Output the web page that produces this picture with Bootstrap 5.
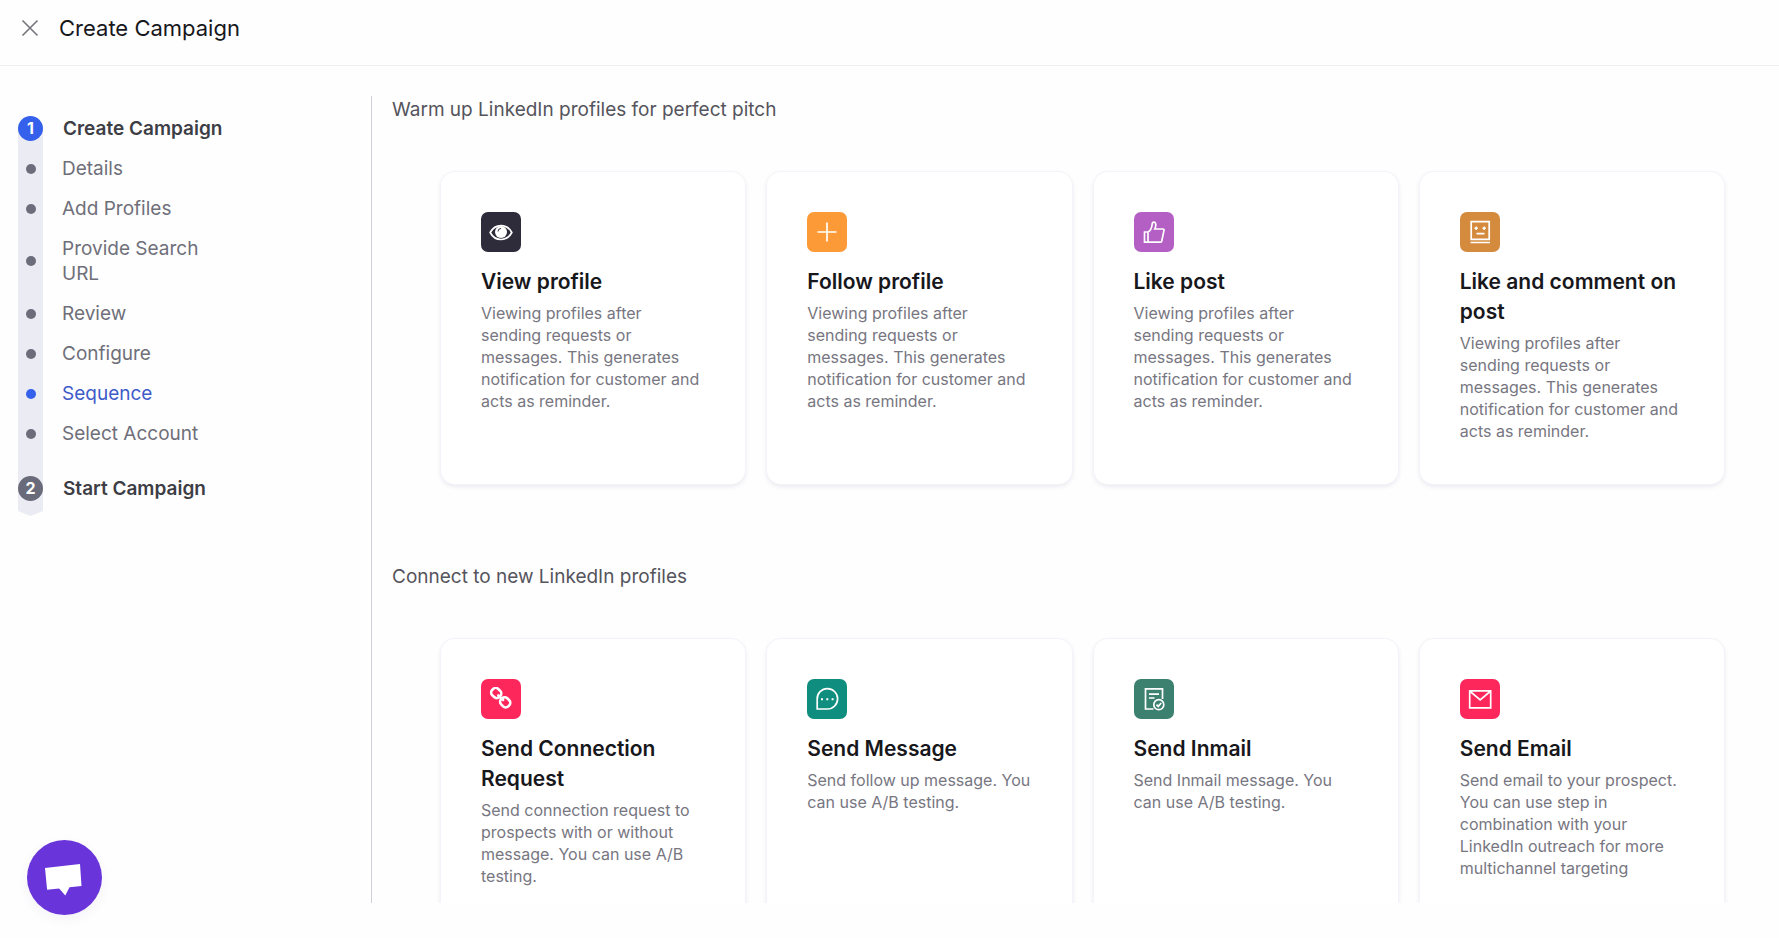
<!DOCTYPE html>
<html lang="en">
<head>
<meta charset="utf-8">
<meta name="viewport" content="width=device-width, initial-scale=1">
<title>Create Campaign</title>
<link rel="stylesheet" href="https://cdn.jsdelivr.net/npm/bootstrap@5.3.0/dist/css/bootstrap.min.css">
<style>
  body { font-family: Inter, "Open Sans", sans-serif; background: #fefefe; color: #17171c; }
  .topbar { height: 66px; padding: 0 20px 9px; gap: 19px; border-bottom: 1px solid #f0edf3; }
  .topbar h1 { font-size: 22px; line-height: 28px; font-weight: 400; }
  .close-btn { width: 20px; height: 20px; color: #77757c; }
  .workspace { padding: 30px 0 35px; min-height: 0; }

  /* step navigation */
  .sidebar { flex: 0 0 371px; padding: 20px 18px 0; }
  .steps { gap: 15px; padding-bottom: 15px; font-size: 19px; line-height: 25px; }
  .steps::before {
    content: ""; position: absolute; z-index: -1; top: 12px; bottom: 0; left: 0; width: 25px;
    background: #ebebf4; clip-path: polygon(0 0, 100% 0, 100% calc(100% - 5px), 50% 100%, 0 calc(100% - 5px));
  }
  .steps li { display: flex; align-items: center; gap: 19px; }
  .steps .major { gap: 20px; }
  .steps a { color: #6f6f7a; text-decoration: none; max-width: 150px; }
  .steps .major a { color: #3d3d45; font-weight: 600; max-width: none; }
  .steps .last { margin-top: 15px; }
  .marker { flex: 0 0 25px; height: 25px; display: grid; place-items: center; border-radius: 50%; color: #fff; font-size: 16px; font-weight: 700; }
  .major .marker { background: #696b7a; }
  .major.current .marker { background: #3460eb; }
  .minor .marker::before { content: ""; width: 10px; height: 10px; border-radius: 50%; background: #6c6d7a; }
  .minor.active .marker::before { background: #3460eb; }
  .steps .active a { color: #3e5bc9; }

  /* action cards */
  .panel { border-left: 1px solid #d2d0d7; padding: 0 55px 0 20px; overflow-y: auto; scrollbar-width: none; }
  .panel::-webkit-scrollbar { display: none; }
  .panel section { margin-bottom: 79px; }
  .panel h2 { font-size: 19px; line-height: 27px; font-weight: 400; color: #55545c; margin: 0 0 49px; }
  .action-grid { display: grid; grid-template-columns: repeat(4, minmax(0, 1fr)); grid-auto-rows: minmax(312px, auto); gap: 22px; padding-left: 49px; }
  .action-card { border: 0; border-radius: 14px; background: #fff; padding: 40px; box-shadow: 0 0 0 1px #f6f2f9, 0 2px 5px rgba(60, 35, 100, .12); }
  .action-card h3 { font-size: 21px; line-height: 30px; font-weight: 600; margin: 15px 0 5px; }
  .action-card p { font-size: 16px; line-height: 22px; color: #777681; margin: 0; }
  .tile { width: 40px; height: 40px; border-radius: 7px; display: grid; place-items: center; color: #fff; }
  .tile svg { width: 24px; height: 24px; fill: none; stroke: currentColor; stroke-width: 1.7; }

  .chat-btn { width: 75px; height: 75px; left: 27px; bottom: 23px; background: #6935da; box-shadow: 0 4px 12px rgba(60, 30, 120, .06); }
</style>
</head>
<body>
<div class="d-flex flex-column vh-100 overflow-hidden">
  <header class="topbar d-flex align-items-center flex-shrink-0">
    <button type="button" class="close-btn btn p-0 border-0 d-flex align-items-center justify-content-center" aria-label="Close">
      <svg width="18" height="18" viewBox="0 0 18 18" fill="none" stroke="currentColor" stroke-width="1.6"><path d="M1.500 1.500l15 15M16.500 1.500l-15 15"/></svg>
    </button>
    <h1 class="m-0">Create Campaign</h1>
  </header>

  <div class="workspace d-flex flex-grow-1">
    <nav class="sidebar" aria-label="Campaign steps">
      <ol class="steps list-unstyled d-flex flex-column position-relative z-0 m-0">
        <li class="major current"><span class="marker">1</span><a href="#">Create Campaign</a></li>
        <li class="minor"><span class="marker"></span><a href="#">Details</a></li>
        <li class="minor"><span class="marker"></span><a href="#">Add Profiles</a></li>
        <li class="minor"><span class="marker"></span><a href="#">Provide Search URL</a></li>
        <li class="minor"><span class="marker"></span><a href="#">Review</a></li>
        <li class="minor"><span class="marker"></span><a href="#">Configure</a></li>
        <li class="minor active"><span class="marker"></span><a href="#" aria-current="step">Sequence</a></li>
        <li class="minor"><span class="marker"></span><a href="#">Select Account</a></li>
        <li class="major last"><span class="marker">2</span><a href="#">Start Campaign</a></li>
      </ol>
    </nav>

    <main class="panel flex-grow-1">
      <section>
        <h2>Warm up LinkedIn profiles for perfect pitch</h2>
        <div class="action-grid">
          <article class="action-card card">
            <div class="tile" style="background:#2e2b3b"><svg viewBox="0 0 24 24"><path d="M1.2 12.5C6 3.200 18 3.200 22.800 12.500 18 21.800 6 21.800 1.200 12.500z"/><circle cx="12" cy="12" r="6" fill="currentColor" stroke="none"/><path d="M9 11.500a3 3 0 0 1 3-3" stroke="#2e2b3b" stroke-width="1"/></svg></div>
            <h3>View profile</h3>
            <p>Viewing profiles after sending requests or messages. This generates notification for customer and acts as reminder.</p>
          </article>
          <article class="action-card card">
            <div class="tile" style="background:#fc9a37"><svg viewBox="0 0 24 24"><path d="M12 2.500v19M2.500 12h19"/></svg></div>
            <h3>Follow profile</h3>
            <p>Viewing profiles after sending requests or messages. This generates notification for customer and acts as reminder.</p>
          </article>
          <article class="action-card card">
            <div class="tile" style="background:#b35fc3"><svg viewBox="0 0 24 24"><path d="M2.500 12h3.500v10.200H2.500zM6 12c3-1.500 3.800-4 4.200-8 .3-2.800 3.600-2.200 3.600.6 0 2-.5 3.600-1 4.400h8.200c.9 0 1.200.6 1 1.400l-2.300 10.800c-.2.700-.6 1-1.300 1H6"/></svg></div>
            <h3>Like post</h3>
            <p>Viewing profiles after sending requests or messages. This generates notification for customer and acts as reminder.</p>
          </article>
          <article class="action-card card">
            <div class="tile" style="background:#d58b3e"><svg viewBox="0 0 24 24"><path d="M3.200 1.700h18v17.600h-18zM2.500 22.500h19.500M8.500 13.700h8"/><path d="M6.500 8.200h3.400M8.200 6.500v3.400M14.500 8.200h3.400M16.200 6.500v3.400" stroke-width="1.500"/></svg></div>
            <h3>Like and comment on post</h3>
            <p>Viewing profiles after sending requests or messages. This generates notification for customer and acts as reminder.</p>
          </article>
        </div>
      </section>

      <section>
        <h2>Connect to new LinkedIn profiles</h2>
        <div class="action-grid">
          <article class="action-card card">
            <div class="tile" style="background:#fd275b"><svg viewBox="0 0 24 24"><g stroke-width="2.600"><rect x="2.200" y="1.700" width="10" height="8.600" rx="3.600" transform="rotate(45 7.200 6)"/><rect x="11.200" y="11" width="10" height="8.600" rx="3.600" transform="rotate(45 16.200 15.300)"/><path d="M9.200 8.300l5 4.800" stroke-linecap="round" stroke-width="2.400"/></g></svg></div>
            <h3>Send Connection Request</h3>
            <p>Send connection request to prospects with or without message. You can use A/B testing.</p>
          </article>
          <article class="action-card card">
            <div class="tile" style="background:#0f8d7e"><svg viewBox="0 0 24 24"><path d="M2.200 22V12A10.200 10.200 0 1 1 12.400 22z"/><path d="M6 12.300h2M11.300 12.300h2M16.600 12.300h2" stroke-width="2"/></svg></div>
            <h3>Send Message</h3>
            <p>Send follow up message. You can use A/B testing.</p>
          </article>
          <article class="action-card card">
            <div class="tile" style="background:#3c806f"><svg viewBox="0 0 24 24"><path d="M11.500 22H3.500V1.800h17V12M7 7.200h10M7 11h5.500"/><circle cx="16.800" cy="17.700" r="5"/><path d="M14.500 17.700l1.700 1.700 3-3.400"/></svg></div>
            <h3>Send Inmail</h3>
            <p>Send Inmail message. You can use A/B testing.</p>
          </article>
          <article class="action-card card">
            <div class="tile" style="background:#fd275b"><svg viewBox="0 0 24 24"><path d="M1.700 3.800h21v17h-21zM1.700 4l10.500 9L22.700 4"/></svg></div>
            <h3>Send Email</h3>
            <p>Send email to your prospect. You can use step in combination with your LinkedIn outreach for more multichannel targeting</p>
          </article>
        </div>
      </section>
    </main>
  </div>
</div>

<button type="button" class="chat-btn btn rounded-circle border-0 p-0 position-fixed" aria-label="Open chat">
  <svg class="d-block" width="75" height="75" viewBox="0 0 75 75" fill="#fff"><path d="M18 28l35-4 1.500 22-12 1.200-4.200 8.300-6.200-7-12 1.300z"/></svg>
</button>
<script src="https://cdn.jsdelivr.net/npm/bootstrap@5.3.0/dist/js/bootstrap.bundle.min.js"></script>
</body>
</html>
